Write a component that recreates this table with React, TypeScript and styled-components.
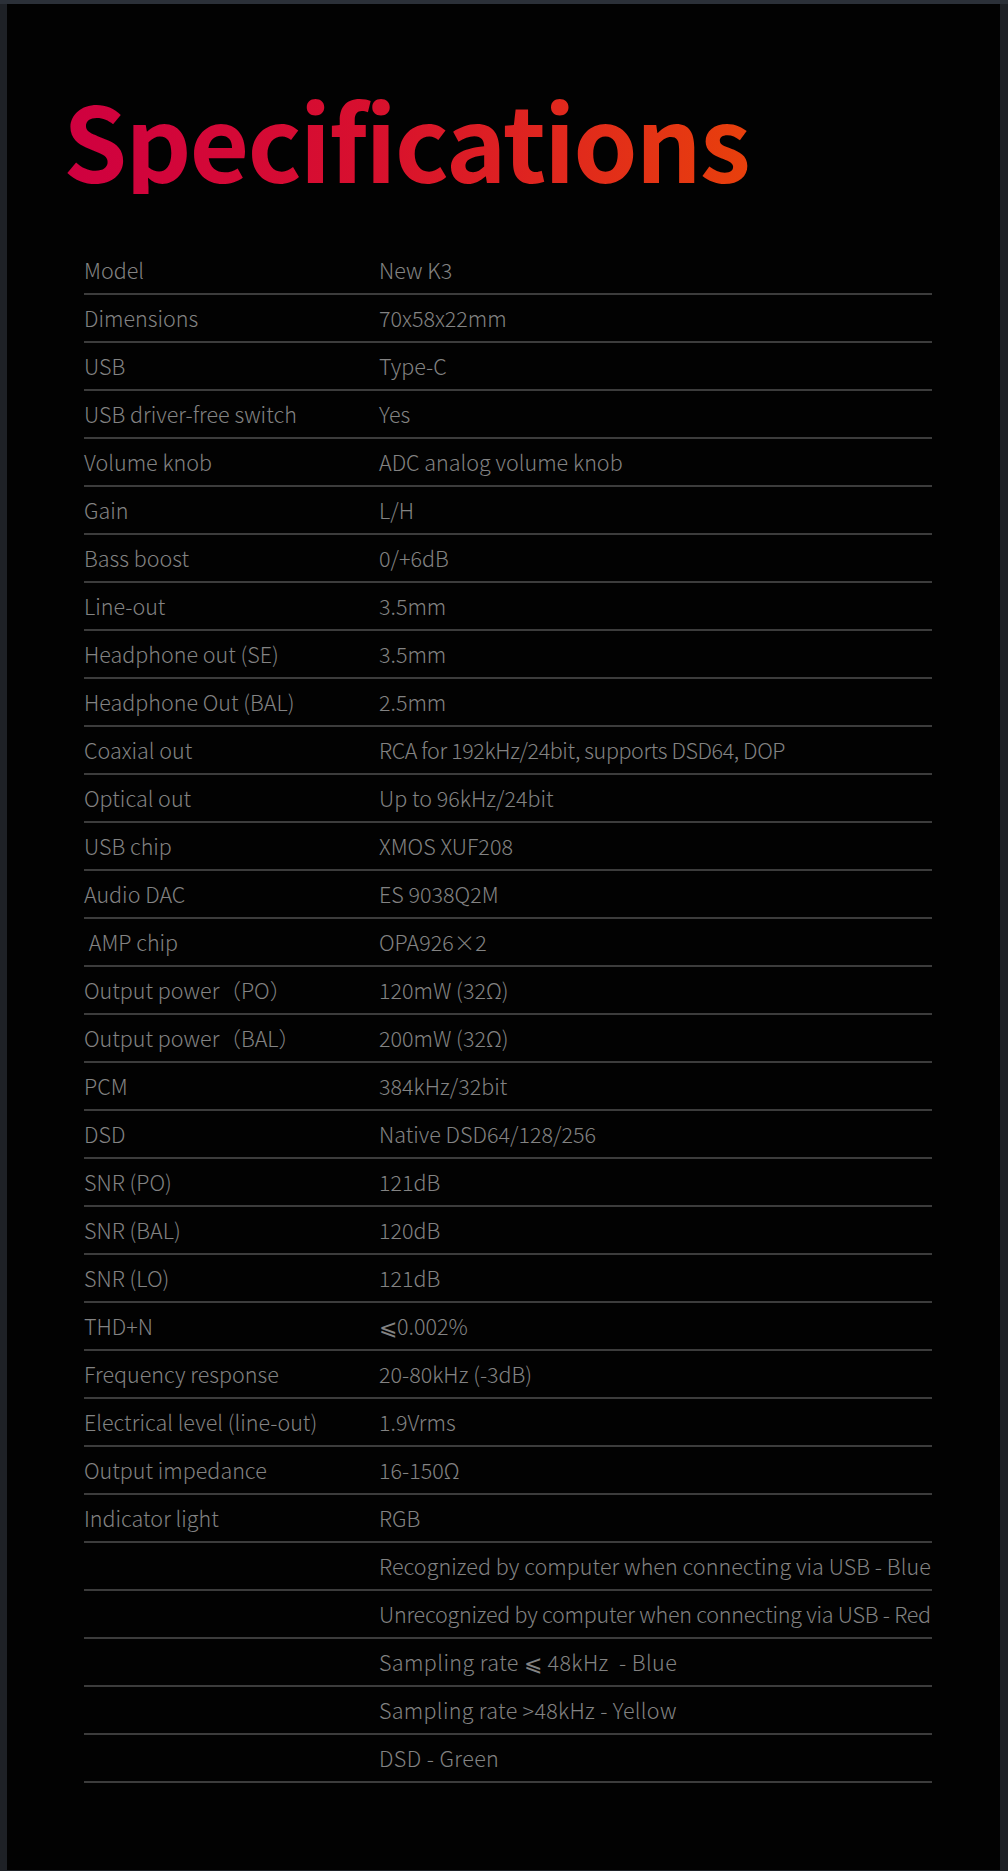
import React from "react";
import styled, { createGlobalStyle } from "styled-components";

const GlobalStyle = createGlobalStyle`
  html, body {
    margin: 0;
    padding: 0;
    background: #1e2126;
  }
  * { box-sizing: border-box; }
`;

const Frame = styled.div`
  width: 1008px;
  min-height: 1871px;
  background: #1e2126;
  border-top: 4px solid #2b3038;
  padding: 0 8px 1px 7px;
`;

const Panel = styled.main`
  background: #020202;
  height: 1866px;
  padding-top: 80px;
  display: flex;
  flex-direction: column;
`;

const Title = styled.h1`
  margin: 0 0 0 56px;
  font-family: "Noto Sans CJK SC", "Noto Sans", sans-serif;
  font-weight: 700;
  font-size: 103px;
  line-height: 110px;
  letter-spacing: -2px;
  background: linear-gradient(90deg, #cf0040 0%, #d8102e 45%, #e8400c 100%);
  -webkit-background-clip: text;
  background-clip: text;
  color: transparent;
  width: fit-content;
`;

const Table = styled.div`
  margin: 53px 68px 0 77px;
  display: flex;
  flex-direction: column;
`;

const Row = styled.div`
  display: grid;
  grid-template-columns: 295px 1fr;
  align-items: center;
  height: 48px;
  border-bottom: 2px solid #3c3c3c;
  padding-bottom: 2px;
`;

const Cell = styled.div<{ $spacing?: number }>`
  font-family: "Noto Sans CJK SC", "Noto Sans", sans-serif;
  font-weight: 300;
  font-size: 21.5px;
  color: #838383;
  white-space: pre;
  letter-spacing: ${(p) => p.$spacing ?? 0}px;
`;

type Spec = { label: string; value: string; spacing?: number };

const specs: Spec[] = [
  { label: "Model", value: "New K3" },
  { label: "Dimensions", value: "70x58x22mm" },
  { label: "USB", value: "Type-C" },
  { label: "USB driver-free switch", value: "Yes" },
  { label: "Volume knob", value: "ADC analog volume knob" },
  { label: "Gain", value: "L/H" },
  { label: "Bass boost", value: "0/+6dB" },
  { label: "Line-out", value: "3.5mm" },
  { label: "Headphone out (SE)", value: "3.5mm" },
  { label: "Headphone Out (BAL)", value: "2.5mm" },
  { label: "Coaxial out", value: "RCA for 192kHz/24bit, supports DSD64, DOP", spacing: -0.4 },
  { label: "Optical out", value: "Up to 96kHz/24bit" },
  { label: "USB chip", value: "XMOS XUF208" },
  { label: "Audio DAC", value: "ES 9038Q2M" },
  { label: "\u00a0AMP chip", value: "OPA926\u00d72" },
  { label: "Output power\uff08PO\uff09", value: "120mW (32\u03a9)" },
  { label: "Output power\uff08BAL\uff09", value: "200mW (32\u03a9)" },
  { label: "PCM", value: "384kHz/32bit" },
  { label: "DSD", value: "Native DSD64/128/256" },
  { label: "SNR (PO)", value: "121dB" },
  { label: "SNR (BAL)", value: "120dB" },
  { label: "SNR (LO)", value: "121dB" },
  { label: "THD+N", value: "\u2a7d0.002%" },
  { label: "Frequency response", value: "20-80kHz (-3dB)" },
  { label: "Electrical level (line-out)", value: "1.9Vrms" },
  { label: "Output impedance", value: "16-150\u03a9" },
  { label: "Indicator light", value: "RGB" },
  { label: "", value: "Recognized by computer when connecting via USB - Blue", spacing: 0.05 },
  { label: "", value: "Unrecognized by computer when connecting via USB - Red", spacing: -0.25 },
  { label: "", value: "Sampling rate \u2a7d 48kHz  - Blue", spacing: 0.4 },
  { label: "", value: "Sampling rate >48kHz - Yellow", spacing: 0.3 },
  { label: "", value: "DSD - Green", spacing: 0.4 },
];

export default function App() {
  return (
    <>
      <GlobalStyle />
      <Frame>
        <Panel>
          <Title>Specifications</Title>
          <Table>
            {specs.map((s, i) => (
              <Row key={i}>
                <Cell>{s.label}</Cell>
                <Cell $spacing={s.spacing}>{s.value}</Cell>
              </Row>
            ))}
          </Table>
        </Panel>
      </Frame>
    </>
  );
}
